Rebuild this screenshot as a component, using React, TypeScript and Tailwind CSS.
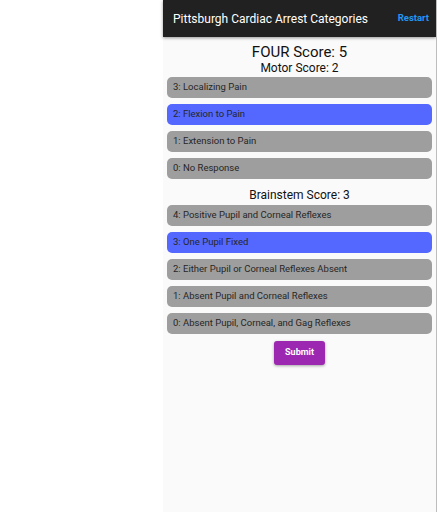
import { useState } from "react";

const motor = ["3: Localizing Pain", "2: Flexion to Pain", "1: Extension to Pain", "0: No Response"];
const brainstem = [
  "4: Positive Pupil and Corneal Reflexes",
  "3: One Pupil Fixed",
  "2: Either Pupil or Corneal Reflexes Absent",
  "1: Absent Pupil and Corneal Reflexes",
  "0: Absent Pupil, Corneal, and Gag Reflexes",
];

const Option = ({ label, active, onClick }: { label: string; active: boolean; onClick: () => void }) => (
  <button
    onClick={onClick}
    className={`w-full h-[21px] rounded-[5px] px-[6px] text-left text-[9.5px] text-[#262626] ${
      active ? "bg-[#5468ff]" : "bg-[#9e9e9e]"
    }`}
  >
    {label}
  </button>
);

export default function App() {
  const [m, setM] = useState(1);
  const [b, setB] = useState(1);

  return (
    <div className="flex h-[512px] bg-white" style={{ fontFamily: "Roboto, 'Noto Sans', sans-serif" }}>
      <div className="w-[163px]" />
      <div className="flex w-[273px] flex-col bg-[#fafafa]">
        <div className="flex h-[37px] items-center justify-between bg-[#212121] pl-[10px] pr-[7px] shadow-[0_1px_3px_rgba(0,0,0,0.4)]">
          <span className="text-[12px] text-white">Pittsburgh Cardiac Arrest Categories</span>
          <span className="text-[9.5px] font-bold text-[#2196f3]">Restart</span>
        </div>
        <div className="flex flex-col px-[4px] pt-[6px]">
          <div className="text-center text-[15px] leading-[18px] text-[#111]">FOUR Score: {3 - m + 4 - b}</div>
          <div className="text-center text-[12px] leading-[14px] text-[#111] mb-[2px]">Motor Score: {3 - m}</div>
          <div className="flex flex-col gap-[6px]">
            {motor.map((l, i) => (
              <Option key={l} label={l} active={i === m} onClick={() => setM(i)} />
            ))}
          </div>
          <div className="mt-[9px] mb-[3px] text-center text-[12px] leading-[14px] text-[#111]">
            Brainstem Score: {4 - b}
          </div>
          <div className="flex flex-col gap-[6px]">
            {brainstem.map((l, i) => (
              <Option key={l} label={l} active={i === b} onClick={() => setB(i)} />
            ))}
          </div>
          <div className="mt-[7px] flex justify-center">
            <button className="h-[24px] w-[51px] rounded-[3px] bg-[#9c27b0] text-[9px] font-bold text-white shadow-[0_1px_3px_rgba(0,0,0,0.35)]">
              Submit
            </button>
          </div>
        </div>
      </div>
      <div className="w-[1px] bg-[#bdbdbd]" />
    </div>
  );
}
